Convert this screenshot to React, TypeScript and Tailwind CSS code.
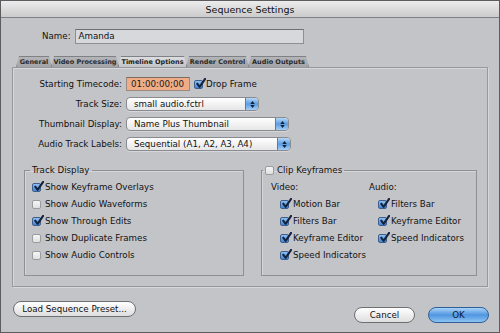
const TABS = [
  { label: "General", w: "w-[36px]" },
  { label: "Video Processing", w: "w-[68px]" },
  { label: "Timeline Options", w: "w-[69px]", active: true },
  { label: "Render Control", w: "w-[63px]" },
  { label: "Audio Outputs", w: "w-[61px]" },
] as const;

const TRACK_DISPLAY = [
  { label: "Show Keyframe Overlays", checked: true },
  { label: "Show Audio Waveforms", checked: false },
  { label: "Show Through Edits", checked: true },
  { label: "Show Duplicate Frames", checked: false },
  { label: "Show Audio Controls", checked: false },
];

const VIDEO_KEYS = ["Motion Bar", "Filters Bar", "Keyframe Editor", "Speed Indicators"];
const AUDIO_KEYS = ["Filters Bar", "Keyframe Editor", "Speed Indicators"];

function Checkbox({ checked }: { checked: boolean }) {
  if (!checked) {
    return (
      <span className="block h-[9px] w-[9px] shrink-0 rounded-[2px] border border-[#9a9b9f] bg-gradient-to-b from-[#f6f6f6] to-[#e0e0e0]" />
    );
  }
  return (
    <span className="relative block h-[9px] w-[9px] shrink-0 rounded-[2px] border border-[#3e5f8e] bg-gradient-to-b from-[#8fc0ee] to-[#3f86d6]">
      <svg viewBox="0 0 10 10" className="absolute -top-[3px] left-[0px] h-[11px] w-[11px]">
        <path d="M2 5.2 L4.2 8 L9.2 0.8" fill="none" stroke="#13233f" strokeWidth="1.9" strokeLinecap="round" strokeLinejoin="round" />
      </svg>
    </span>
  );
}

function Popup({ value, w }: { value: string; w: string }) {
  return (
    <div className={`flex h-[14px] ${w} items-stretch overflow-hidden rounded-[4px] border border-[#8a8b8f] bg-gradient-to-b from-[#ffffff] to-[#e6e6e6] shadow-[0_1px_0_#d6d7da]`}>
      <span className="flex-1 truncate pl-[7px] leading-[12px] text-[#111]">{value}</span>
      <span className="flex w-[13px] flex-col items-center justify-center gap-[1px] rounded-r-[3px] border-l border-[#4d7fb8] bg-gradient-to-b from-[#b4d8f8] via-[#5b9de2] to-[#a4cef5]">
        <svg viewBox="0 0 6 4" className="h-[3px] w-[5px]"><path d="M0 4 L3 0 L6 4 Z" fill="#10233d" /></svg>
        <svg viewBox="0 0 6 4" className="h-[3px] w-[5px]"><path d="M0 0 L3 4 L6 0 Z" fill="#10233d" /></svg>
      </span>
    </div>
  );
}

function FormRow({ label, children }: { label: string; children: React.ReactNode }) {
  return (
    <div className="flex h-[14px] items-center">
      <span className="w-[109px] text-right text-[#111]">{label}</span>
      <div className="ml-[4px] flex items-center">{children}</div>
    </div>
  );
}

function CheckRow({ label, checked }: { label: string; checked: boolean }) {
  return (
    <div className="flex h-[17px] items-center gap-[4px]">
      <Checkbox checked={checked} />
      <span className="text-[#111]">{label}</span>
    </div>
  );
}

export default function App() {
  return (
    <div className="flex h-[333px] w-[500px] flex-col overflow-hidden border border-[#5b5c60] bg-[#c3c4c8] font-['DejaVu_Sans',sans-serif] text-[8.7px] leading-[11px]">
      <div className="flex h-[17px] shrink-0 items-center justify-center border-b border-[#7f8084] bg-gradient-to-b from-[#ececec] to-[#cbcbcb] text-[9.5px] text-[#111]">
        Sequence Settings
      </div>

      <div className="mt-[11px] flex h-[15px] items-center pl-[41px]">
        <span className="text-[#111]">Name:</span>
        <div className="ml-[4px] flex h-[15px] w-[229px] items-center border border-[#8e8f93] border-t-[#6f7074] bg-[#d7d8dc] pl-[3px] text-[#111]">
          Amanda
        </div>
      </div>

      <div className="mt-[12px] flex h-[11px] pl-[15px]">
        {TABS.map((tab) => (
          <div
            key={tab.label}
            className={`-mr-[1px] flex ${tab.w} items-center justify-center border border-b-0 border-[#808185] text-[6.5px] font-bold [clip-path:polygon(3px_0,calc(100%_-_3px)_0,100%_100%,0_100%)] ${
              "active" in tab
                ? "bg-gradient-to-b from-[#dcdde0] to-[#c3c4c8] text-[#222]"
                : "bg-gradient-to-b from-[#b4b5b9] to-[#a2a3a7] text-[#2a2a2a]"
            }`}
          >
            {tab.label}
          </div>
        ))}
      </div>

      <div className="mx-[11px] flex h-[220px] flex-col border border-[#97989c] shadow-[inset_1px_1px_0_#d6d7da,1px_1px_0_#d6d7da]">
        <div className="flex flex-col gap-[6px] pt-[9px]">
          <FormRow label="Starting Timecode:">
            <div className="flex h-[14px] w-[64px] items-center border border-[#9a8a80] border-t-[#7a6a60] bg-[#efac86] pl-[4px] text-[#222]">
              01:00:00;00
            </div>
            <span className="ml-[4px]">
              <Checkbox checked />
            </span>
            <span className="ml-[3px] text-[#111]">Drop Frame</span>
          </FormRow>
          <FormRow label="Track Size:">
            <Popup value="small audio.fctrl" w="w-[133px]" />
          </FormRow>
          <FormRow label="Thumbnail Display:">
            <Popup value="Name Plus Thumbnail" w="w-[163px]" />
          </FormRow>
          <FormRow label="Audio Track Labels:">
            <Popup value="Sequential (A1, A2, A3, A4)" w="w-[165px]" />
          </FormRow>
        </div>

        <div className="mt-[14px] flex gap-[17px] pl-[11px]">
          <fieldset className="h-[111px] w-[220px] border border-[#8f9094] shadow-[inset_1px_1px_0_#d4d5d8]">
            <legend className="ml-[5px] px-[2px] text-[#111]">Track Display</legend>
            <div className="flex flex-col pl-[7px] pt-[3px]">
              {TRACK_DISPLAY.map((item) => (
                <CheckRow key={item.label} label={item.label} checked={item.checked} />
              ))}
            </div>
          </fieldset>

          <fieldset className="h-[111px] w-[216px] border border-[#8f9094] shadow-[inset_1px_1px_0_#d4d5d8]">
            <legend className="ml-[1px] flex items-center gap-[3px] px-[2px] text-[#111]">
              <Checkbox checked={false} />
              Clip Keyframes
            </legend>
            <div className="flex pl-[9px] pt-[3px]">
              <div className="flex w-[98px] flex-col">
                <div className="flex h-[17px] items-center text-[#111]">Video:</div>
                <div className="flex flex-col pl-[9px]">
                  {VIDEO_KEYS.map((k) => (
                    <CheckRow key={k} label={k} checked />
                  ))}
                </div>
              </div>
              <div className="flex flex-col">
                <div className="flex h-[17px] items-center text-[#111]">Audio:</div>
                <div className="flex flex-col pl-[9px]">
                  {AUDIO_KEYS.map((k) => (
                    <CheckRow key={k} label={k} checked />
                  ))}
                </div>
              </div>
            </div>
          </fieldset>
        </div>
      </div>

      <div className="flex items-start justify-between px-[12px] pt-[14px]">
        <button
          type="button"
          className="flex h-[16px] w-[123px] items-center justify-center rounded-full border border-[#6e6f73] bg-gradient-to-b from-[#ffffff] to-[#dedede] text-[#111]"
        >
          Load Sequence Preset...
        </button>
        <div className="mt-[6px] flex gap-[13px]">
          <button
            type="button"
            className="flex h-[16px] w-[61px] items-center justify-center rounded-full border border-[#6e6f73] bg-gradient-to-b from-[#ffffff] to-[#dedede] text-[#111]"
          >
            Cancel
          </button>
          <button
            type="button"
            className="-mr-[2px] flex h-[16px] w-[61px] items-center justify-center rounded-full border border-[#2f5f96] bg-gradient-to-b from-[#a9d3f8] via-[#4f95e0] to-[#8cc4f3] text-[#0d1a2e]"
          >
            OK
          </button>
        </div>
      </div>
    </div>
  );
}
